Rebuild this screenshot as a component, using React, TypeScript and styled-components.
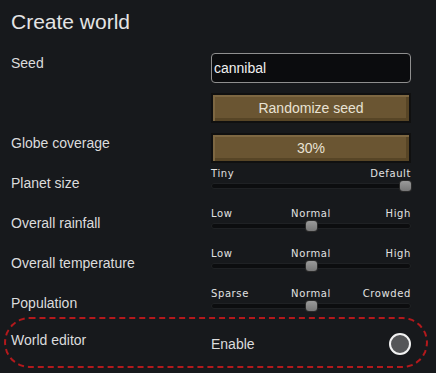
import React from "react";
import styled, { createGlobalStyle } from "styled-components";

const GlobalStyle = createGlobalStyle`
  html, body {
    margin: 0;
    padding: 0;
    background: #17191c;
  }
  body {
    font-family: "Liberation Sans", Arial, sans-serif;
    color: #dcdcdc;
  }
`;

const Page = styled.div`
  width: 436px;
  height: 373px;
  box-sizing: border-box;
  padding: 10px 0 0 0;
  overflow: hidden;
`;

const Title = styled.h1`
  margin: 0 0 19px 11px;
  font-size: 21px;
  line-height: 24px;
  font-weight: 400;
  color: #e4e4e4;
`;

const Row = styled.div<{ $height: number }>`
  display: grid;
  grid-template-columns: 200px 200px;
  height: ${(p) => p.$height}px;
  padding-left: 11px;
`;

const Label = styled.div`
  font-size: 14px;
  line-height: 20px;
  color: #dcdcdc;
`;

const Stack = styled.div`
  display: flex;
  flex-direction: column;
  gap: 10px;
`;

const SeedInput = styled.div`
  height: 30px;
  box-sizing: border-box;
  background: #0b0c0e;
  border: 1px solid #8f8f8f;
  border-radius: 4px;
  padding: 0 2px;
  font-size: 14px;
  line-height: 28px;
  color: #f0f0f0;
`;

const Button = styled.div`
  height: 30px;
  box-sizing: border-box;
  border: 2px solid #101010;
  background: #6a5532;
  box-shadow: inset 1px 1px 0 1px #7d6742, inset -2px -2px 0 1px #574526;
  display: flex;
  align-items: center;
  justify-content: center;
  font-size: 14px;
  color: #e8e2d4;
`;

const SliderBox = styled.div`
  margin-top: -5px;
`;

const Ticks = styled.div`
  display: grid;
  grid-template-columns: 1fr auto 1fr;
  font-family: "DejaVu Sans", sans-serif;
  font-size: 10px;
  line-height: 12px;
  letter-spacing: 0.6px;
  color: #e2e2e2;

  span:nth-child(2) {
    text-align: center;
  }
  span:nth-child(3) {
    text-align: right;
  }
`;

const Track = styled.div`
  position: relative;
  margin-top: 3px;
  height: 6px;
  background: #0c0d0f;
  border-radius: 3px;
  box-shadow: inset 0 0 0 1px #1f2124;
`;

const Thumb = styled.div`
  position: absolute;
  top: -2px;
  width: 11px;
  height: 10px;
  margin-left: -5.5px;
  border-radius: 3px;
  background: linear-gradient(#9a9a9a, #777777);
  box-shadow: 0 0 0 1px #2a2a2a;
`;

const EditorBox = styled.div`
  margin-left: 4px;
  width: 424px;
  height: 51px;
  box-sizing: border-box;
  border: 2px dashed #b3191c;
  border-radius: 26px;
  display: grid;
  grid-template-columns: 200px 1fr;
  align-items: center;
  padding-left: 5px;
  padding-right: 15px;
`;

const EditorLabel = styled(Label)`
  margin-top: -6px;
`;

const EnableRow = styled.div`
  display: flex;
  align-items: center;
  justify-content: space-between;
  font-size: 14px;
  color: #dcdcdc;
  margin-top: 2px;
`;

const Toggle = styled.div`
  width: 22px;
  height: 22px;
  box-sizing: border-box;
  border-radius: 50%;
  border: 2px solid #f2f2f2;
  background: #555658;
`;

interface ISliderProps {
  labels: [string, string, string];
  value: number;
}

const Slider: React.FC<ISliderProps> = ({ labels, value }) => (
  <SliderBox>
    <Ticks>
      {labels.map((l, idx) => (
        <span key={idx}>{l}</span>
      ))}
    </Ticks>
    <Track>
      <Thumb style={{ left: `calc(${value * 100}% - ${value * 12 - 6}px)` }} />
    </Track>
  </SliderBox>
);

const sliders: { label: string; labels: [string, string, string]; value: number; height: number }[] = [
  { label: "Planet size", labels: ["Tiny", "", "Default"], value: 1, height: 40 },
  { label: "Overall rainfall", labels: ["Low", "Normal", "High"], value: 0.5, height: 40 },
  { label: "Overall temperature", labels: ["Low", "Normal", "High"], value: 0.5, height: 40 },
  { label: "Population", labels: ["Sparse", "Normal", "Crowded"], value: 0.5, height: 24 },
];

export default function App() {
  return (
    <>
      <GlobalStyle />
      <Page>
        <Title>Create world</Title>
        <Row $height={80}>
          <Label>Seed</Label>
          <Stack>
            <SeedInput>cannibal</SeedInput>
            <Button>Randomize seed</Button>
          </Stack>
        </Row>
        <Row $height={40}>
          <Label>Globe coverage</Label>
          <Button>30%</Button>
        </Row>
        {sliders.map((s) => (
          <Row $height={s.height} key={s.label}>
            <Label>{s.label}</Label>
            <Slider labels={s.labels} value={s.value} />
          </Row>
        ))}
        <EditorBox>
          <EditorLabel>World editor</EditorLabel>
          <EnableRow>
            Enable
            <Toggle />
          </EnableRow>
        </EditorBox>
      </Page>
    </>
  );
}
